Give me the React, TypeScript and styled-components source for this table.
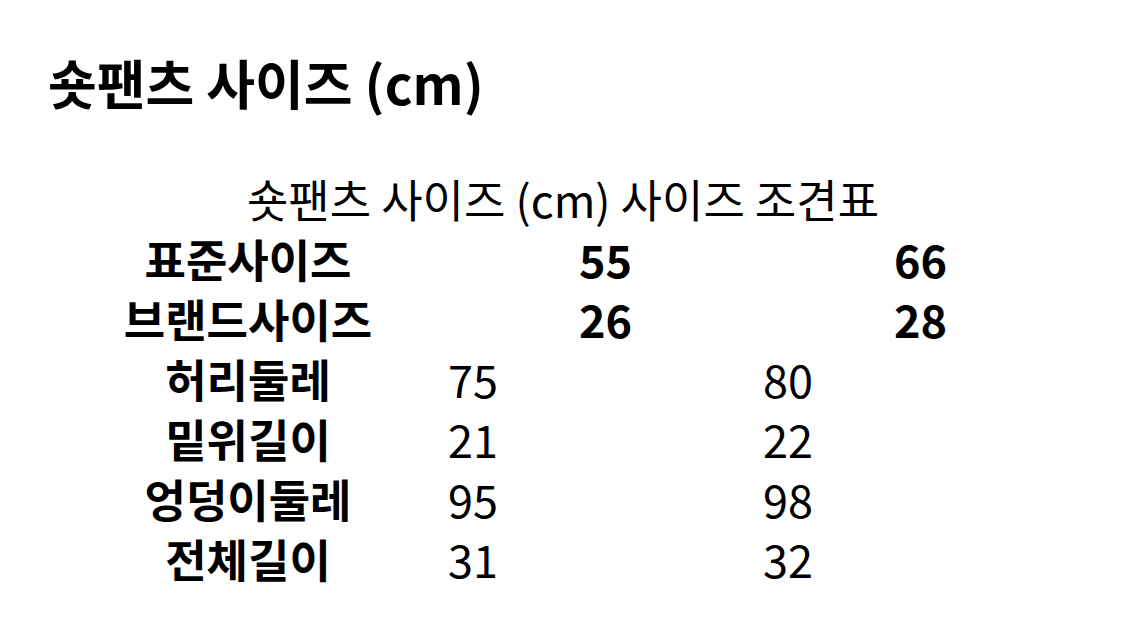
import React from 'react'
import styled, { createGlobalStyle } from 'styled-components'

const GlobalStyle = createGlobalStyle`
  html, body {
    margin: 0;
    padding: 0;
    background: #ffffff;
  }
  body {
    font-family: "Noto Sans CJK KR", "Noto Sans", sans-serif;
    color: #000000;
  }
`

const Page = styled.div`
  width: 1125px;
  height: 626px;
  padding: 46px 48px 0 48px;
  box-sizing: border-box;
  overflow: hidden;
`

const Title = styled.h1`
  margin: 0;
  font-size: 53px;
  font-weight: 700;
  line-height: 72px;
`

const SizeTable = styled.table`
  width: 1030px;
  margin-top: 51px;
  border-collapse: collapse;
  font-size: 45px;
  line-height: 60px;
  table-layout: fixed;
`

const Caption = styled.caption`
  font-weight: 400;
  text-align: center;
`

const HeadCell = styled.th`
  padding: 0;
  font-weight: 700;
  text-align: center;
`

const DataCell = styled.td`
  padding: 0;
  text-align: left;
`

const rows: { label: string; values: string[]; head?: boolean }[] = [
  { label: '표준사이즈', values: ['55', '66'], head: true },
  { label: '브랜드사이즈', values: ['26', '28'], head: true },
  { label: '허리둘레', values: ['75', '80'] },
  { label: '밑위길이', values: ['21', '22'] },
  { label: '엉덩이둘레', values: ['95', '98'] },
  { label: '전체길이', values: ['31', '32'] },
]

const App = () => {
  return (
    <>
      <GlobalStyle />
      <Page>
        <Title>숏팬츠 사이즈 (cm)</Title>
        <SizeTable>
          <Caption>숏팬츠 사이즈 (cm) 사이즈 조견표</Caption>
          <colgroup>
            <col style={{ width: 400 }} />
            <col style={{ width: 315 }} />
            <col style={{ width: 315 }} />
          </colgroup>
          <tbody>
            {rows.map(row => (
              <tr key={row.label}>
                <HeadCell>{row.label}</HeadCell>
                {row.values.map((v, i) =>
                  row.head ? <HeadCell key={i}>{v}</HeadCell> : <DataCell key={i}>{v}</DataCell>
                )}
              </tr>
            ))}
          </tbody>
        </SizeTable>
      </Page>
    </>
  )
}

export default App
